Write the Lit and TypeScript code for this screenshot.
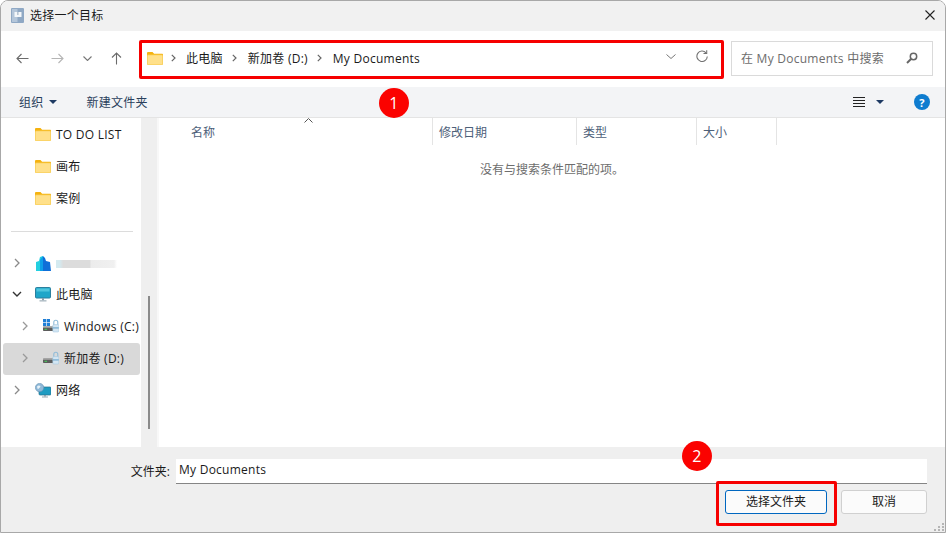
import { LitElement, html, css, svg } from "lit";
import { customElement } from "lit/decorators.js";

const chevR = (c = "#8a8a8a") => html`<svg width="6" height="10" viewBox="0 0 6 10"><path d="M1 1l4 4-4 4" fill="none" stroke=${c} stroke-width="1.3"/></svg>`;
const sep = (cls = "") => html`<svg class="sep ${cls}" width="5" height="8" viewBox="0 0 5 8"><path d="M.8.800L4 4 .8 7.200" fill="none" stroke="#666" stroke-width="1.200"/></svg>`;
const folder = () => html`<svg width="16" height="13" viewBox="0 0 16 13">
  <path d="M0 1.200C0 .5.5 0 1.200 0h4.300l1.600 1.700H15c.6 0 1 .4 1 1V4H0z" fill="#f5b20f"/>
  <rect x="0" y="2.600" width="16" height="10.400" rx="1" fill="#f7c948"/>
  <rect x=".6" y="3.200" width="14.800" height="9.200" rx=".6" fill="#ffe08a"/>
</svg>`;
const drive = (win: boolean) => html`<svg width="16" height="14" viewBox="0 0 16 14">
  ${win ? svg`<g fill="#1f7fd6"><rect x="0" y="0" width="3.200" height="3.200"/><rect x="3.800" y="0" width="3.200" height="3.200"/><rect x="0" y="3.800" width="3.200" height="3.200"/><rect x="3.800" y="3.800" width="3.200" height="3.200"/></g>` : ""}
  <path d="M10.800 6V3.200a2 2 0 0 1 4 0V6" fill="none" stroke="#8fbbd8" stroke-width="1.100"/>
  <rect x="0" y="7.500" width="12" height="4.500" rx=".8" fill="#5c5c5c"/>
  <rect x="0" y="7.500" width="12" height="1.200" fill="#b0b0b0"/>
  <rect x="1.500" y="9.800" width="2.500" height="1" fill="#46d35a"/>
  <rect x="9.800" y="5.600" width="6" height="7.400" rx="1" fill="#d3e6f3" stroke="#9cc3dc" stroke-width=".5"/>
  <rect x="9.800" y="8.200" width="6" height="1.400" fill="#7fb2d4"/>
</svg>`;

interface NavRow { label?: string; icon: unknown; level: number; arrow?: "r" | "d"; selected?: boolean; blur?: boolean; lift?: boolean; }

const rowsTop: NavRow[] = [
  { label: "TO DO LIST", icon: folder(), level: 1 },
  { label: "画布", icon: folder(), level: 1 },
  { label: "案例", icon: folder(), level: 1 },
];
const rowsBottom: NavRow[] = [
  { blur: true, level: 1, arrow: "r", icon: html`<svg width="15" height="15" viewBox="0 0 15 15"><path d="M0 6l3-1 1-4 3-1v15H0z" fill="#22cfe0"/><path d="M7 0l2 2 1 3 4 1 1 9H7z" fill="#0f6fd8"/><path d="M4 4l3-4v15H4z" fill="#0d9fe8"/></svg>` },
  { label: "此电脑", level: 1, arrow: "d", lift: true, icon: html`<svg width="16" height="15" viewBox="0 0 16 15"><rect x=".5" y=".5" width="15" height="10.500" rx="1" fill="#1fa6c9" stroke="#2b7f9e"/><rect x="1.500" y="1.500" width="13" height="3" fill="#4fc5dd"/><rect x="7" y="11" width="2" height="2.400" fill="#8aa0ad"/><rect x="4.500" y="13.200" width="7" height="1.300" fill="#a7b6bf"/></svg>` },
  { label: "Windows (C:)", level: 2, arrow: "r", lift: true, icon: drive(true) },
  { label: "新加卷 (D:)", level: 2, arrow: "r", selected: true, lift: true, icon: drive(false) },
  { label: "网络", level: 1, arrow: "r", lift: true, icon: html`<svg width="16" height="15" viewBox="0 0 16 15"><rect x="4" y="4" width="12" height="8" rx="1" fill="#1f9cc2" stroke="#22708c" stroke-width=".7"/><rect x="9" y="12" width="2" height="1.600" fill="#8aa0ad"/><rect x="7" y="13.400" width="6" height="1.200" fill="#a7b6bf"/><circle cx="4.600" cy="4.600" r="4.200" fill="#8fb9d8" stroke="#5f8fb0" stroke-width=".6"/><path d="M2 3.400c1.400-1.600 2.600-1 3.300-.3.5 1.200-1 1.800-1.800 2.600-.6.800-1 0-1.500-2.300z" fill="#e7f2f9"/></svg>` },
];

@customElement("app-root")
export class AppRoot extends LitElement {
  static styles = css`
    :host { display: block; position: relative; width: 946px; height: 533px; overflow: hidden; background: #fff;
      font-family: "Open Sans", "Noto Sans CJK SC", sans-serif; font-size: 12px; letter-spacing: .25px; color: #1a1a1a; }
    svg { display: block; flex: none; }
    .win { box-sizing: border-box; height: 533px; display: flex; flex-direction: column; border: 1px solid #a8a8a8; border-radius: 8px 8px 0 0; overflow: hidden; background: #fff; }

    .title { height: 30px; flex: none; box-sizing: border-box; background: #f1f1f1; display: flex; align-items: center; padding: 0 10px 2px; }
    .title .name { margin-left: 6px; }
    .title .close { margin-left: auto; }

    .addr-row { height: 56px; flex: none; box-sizing: border-box; display: flex; align-items: center; padding: 0 0 2px 4px; background: #fff; }
    .nav { display: flex; justify-content: center; align-items: center; height: 30px; }
    .w35 { width: 35px; } .w25 { width: 25px; } .w33 { width: 33px; }
    .addr { box-sizing: border-box; margin-left: 6px; width: 584px; height: 38px; display: flex; align-items: center; padding-left: 8px; }
    .crumb { display: flex; align-items: center; }
    .crumb svg.sep { margin: 0 10.500px 0 9.500px; }
    .crumb svg.sep.first { margin: 0 10px 0 0; }
    .folder-first { margin-right: 8px; }
    .addr .end { margin: 0 0 4px auto; display: flex; align-items: center; gap: 20px; padding-right: 15px; }
    .search { box-sizing: border-box; margin: 1px 0 0 8px; width: 202px; height: 35px; border: 1px solid #dadada; display: flex; align-items: center; padding: 0 14px 1px 9px; color: #6d6d6d; justify-content: space-between; }

    .tools { height: 31px; flex: none; box-sizing: border-box; background: #f3f4f6; border-bottom: 1px solid #e4e4e4; display: flex; align-items: center; padding-left: 18px; color: #2a3f5c; }
    .caret { width: 0; height: 0; border-left: 4px solid transparent; border-right: 4px solid transparent; border-top: 4px solid #1e3a63; }
    .tools .caret.org { margin: 0 30px 0 5px; }
    .tools .right { margin-left: auto; display: flex; align-items: center; padding-right: 15px; }
    .tools .right .caret { margin: 0 30px 0 11px; }
    .help { width: 16px; height: 16px; border-radius: 50%; background: #0f7ccf; color: #fff; font-size: 11px; font-weight: 700; display: flex; align-items: center; justify-content: center; }

    .main { flex: 1; min-height: 0; display: flex; }
    .side { width: 140px; flex: none; background: #fff; display: flex; flex-direction: column; overflow: hidden; }
    .row { height: 32px; flex: none; box-sizing: border-box; display: flex; align-items: center; white-space: nowrap; margin: 0 1px 0 2px; border-radius: 3px; }
    .row.lift { padding-bottom: 2px; }
    .row.selected { background: #d9d9d9; }
    .row .arrow { width: 10px; display: flex; justify-content: center; flex: none; }
    .row.l1 { padding-left: 9px; }
    .row.l2 { padding-left: 17px; }
    .row.l1 .ic { margin-left: 13px; }
    .row.l2 .ic { margin-left: 13px; }
    .row .ic { width: 16px; display: flex; justify-content: center; margin-right: 5px; }
    .blur { width: 61px; height: 8px; margin-top: 2px; background: linear-gradient(90deg, #d4eaf0 0, #d4eaf0 6%, #dcdcdc 12%, #dcdcdc 56%, #ececec 57%, #f0f0f0 95%, transparent 100%); }
    .divider { height: 1px; background: #dcdcdc; margin: 17px 8px 15px 10px; flex: none; }
    .scroll { width: 16px; flex: none; background: #efefef; position: relative; }
    .thumb { position: absolute; left: 7px; top: 178px; width: 2px; height: 133px; background: #8a8a8a; }
    .gutter { width: 2px; flex: none; background: #f8f8f8; }
    .content { flex: 1; display: flex; flex-direction: column; align-items: stretch; min-width: 0; background: #fff; }
    .head { display: flex; height: 27px; color: #4d6079; flex: none; position: relative; letter-spacing: 0; }
    .cell { box-sizing: border-box; border-right: 1px solid #e4e4e4; padding: 0 6px; display: flex; align-items: center; }
    .cell.name { width: 274px; padding-left: 32px; }
    .cell.date { width: 144px; }
    .cell.type { width: 120px; }
    .cell.size { width: 80px; }
    .sort { position: absolute; left: 145px; top: 0; }
    .empty { text-align: center; margin-top: 15px; color: #6d6d6d; letter-spacing: 0; }

    .bottom { height: 85px; flex: none; background: #efefef; display: flex; flex-direction: column; padding: 12px 18px 0 0; box-sizing: border-box; position: relative; }
    .file { display: flex; align-items: center; justify-content: flex-end; height: 25px; }
    .file label { margin: 0 6px 2px 0; letter-spacing: 0; }
    .file .input { box-sizing: border-box; width: 751px; height: 25px; background: #fff; border-bottom: 1px solid #858585; display: flex; align-items: center; padding: 0 0 3px 3px; }
    .btns { display: flex; justify-content: flex-end; margin-top: 6px; gap: 14px; letter-spacing: 0; }
    .btn { box-sizing: border-box; height: 24px; border-radius: 3px; background: #fbfbfb; border: 1px solid #d0d0d0; display: flex; align-items: center; justify-content: center; padding-bottom: 2px; }
    .btn.primary { width: 102px; border-color: #0067c0; }
    .btn.cancel { width: 86px; }
    .grip { position: absolute; right: 0; bottom: 0; }

    .box { position: absolute; box-sizing: border-box; border: 3px solid #f60000; border-radius: 2px; pointer-events: none; }
    .box.a { left: 139px; top: 40px; width: 585px; height: 39px; }
    .box.b { left: 716px; top: 481px; width: 121px; height: 45px; }
    .badge { position: absolute; width: 30px; height: 30px; border-radius: 50%; background: #fb0200; color: #fff; font-size: 16px; display: flex; align-items: center; justify-content: center; }
    .badge.a { left: 379px; top: 88px; }
    .badge.b { left: 682px; top: 441px; }
  `;

  private row(r: NavRow) {
    return html`<div class="row l${r.level} ${r.selected ? "selected" : ""} ${r.lift ? "lift" : ""}">
      <span class="arrow">${r.arrow === "r" ? chevR(r.level === 2 ? "#9a9a9a" : "#8a8a8a") : r.arrow === "d"
        ? html`<svg width="10" height="6" viewBox="0 0 10 6"><path d="M1 1l4 4 4-4" fill="none" stroke="#333" stroke-width="1.400"/></svg>` : ""}</span>
      <span class="ic">${r.icon}</span>
      ${r.blur ? html`<span class="blur"></span>` : html`<span>${r.label}</span>`}
    </div>`;
  }

  render() {
    return html`
      <div class="win">
        <div class="title">
          <svg width="13" height="15" viewBox="0 0 13 15"><rect width="13" height="15" rx="1" fill="#8fa8c4"/><rect x="1" y="1" width="5.500" height="13" fill="#b4c6da"/><rect x="3.500" y="4" width="7" height="5" fill="#f4f7fa"/><rect x="6.500" y="4" width=".8" height="3" fill="#7f95ad"/></svg>
          <span class="name">选择一个目标</span>
          <svg class="close" width="10" height="10" viewBox="0 0 10 10"><path d="M.5.500l9 9M9.500.500l-9 9" stroke="#222" stroke-width="1.100"/></svg>
        </div>

        <div class="addr-row">
          <span class="nav w35"><svg width="13" height="11" viewBox="0 0 13 11"><path d="M12.500 5.500H1M5.500 1L1 5.500 5.500 10" fill="none" stroke="#6b6b6b" stroke-width="1.100"/></svg></span>
          <span class="nav w35"><svg width="13" height="11" viewBox="0 0 13 11"><path d="M.5 5.500H12M7.500 1L12 5.500 7.500 10" fill="none" stroke="#b5b5b5" stroke-width="1.100"/></svg></span>
          <span class="nav w25"><svg width="9" height="5" viewBox="0 0 9 5"><path d="M.5.500l4 4 4-4" fill="none" stroke="#777" stroke-width="1.100"/></svg></span>
          <span class="nav w33"><svg width="11" height="13" viewBox="0 0 11 13"><path d="M5.500 12.500V1M1 5.500L5.500 1 10 5.500" fill="none" stroke="#6b6b6b" stroke-width="1.100"/></svg></span>
          <div class="addr">
            <span class="crumb">
              <span class="folder-first">${folder()}</span>
              ${sep("first")}
              <span>此电脑</span>
              ${sep()}
              <span>新加卷 (D:)</span>
              ${sep()}
              <span>My Documents</span>
            </span>
            <span class="end">
              <svg width="10" height="5" viewBox="0 0 10 5"><path d="M.5.500L5 4.500 9.500.500" fill="none" stroke="#777" stroke-width="1"/></svg>
              <svg width="12" height="12" viewBox="0 0 12 12"><path d="M10 2.800A5.200 5.200 0 1 0 11.300 6.500" fill="none" stroke="#737373" stroke-width="1.100"/><path d="M10.700.300v3.200H7.500" fill="none" stroke="#737373" stroke-width="1.100"/></svg>
            </span>
          </div>
          <div class="search">
            <span>在 My Documents 中搜索</span>
            <svg width="12" height="12" viewBox="0 0 12 12"><circle cx="7.500" cy="4.500" r="3.200" fill="none" stroke="#666" stroke-width="1.500"/><path d="M5 7L1 11" stroke="#666" stroke-width="2"/></svg>
          </div>
        </div>

        <div class="tools">
          <span>组织</span><span class="caret org"></span><span>新建文件夹</span>
          <span class="right">
            <svg width="12" height="10" viewBox="0 0 12 10"><path d="M0 .500h12M0 3.500h12M0 6.500h12M0 9.500h12" stroke="#222" stroke-width="1"/></svg>
            <span class="caret"></span>
            <span class="help">?</span>
          </span>
        </div>

        <div class="main">
          <div class="side">
            ${rowsTop.map((r) => this.row(r))}
            <div class="divider"></div>
            ${rowsBottom.map((r) => this.row(r))}
          </div>
          <div class="scroll"><div class="thumb"></div></div>
          <div class="gutter"></div>
          <div class="content">
            <div class="head">
              <span class="cell name">名称</span>
              <span class="cell date">修改日期</span>
              <span class="cell type">类型</span>
              <span class="cell size">大小</span>
              <svg class="sort" width="9" height="5" viewBox="0 0 9 5"><path d="M.5 4.500l4-4 4 4" fill="none" stroke="#555" stroke-width="1"/></svg>
            </div>
            <div class="empty">没有与搜索条件匹配的项。</div>
          </div>
        </div>

        <div class="bottom">
          <div class="file">
            <label>文件夹:</label>
            <div class="input">My Documents</div>
          </div>
          <div class="btns">
            <div class="btn primary">选择文件夹</div>
            <div class="btn cancel">取消</div>
          </div>
          <svg class="grip" width="11" height="9" viewBox="0 0 11 9" fill="#b5b5b5"><rect x="8" y="0" width="2" height="2"/><rect x="4" y="3" width="2" height="2"/><rect x="8" y="3" width="2" height="2"/><rect x="0" y="6" width="2" height="2"/><rect x="4" y="6" width="2" height="2"/><rect x="8" y="6" width="2" height="2"/></svg>
        </div>
      </div>
      <div class="box a"></div>
      <div class="box b"></div>
      <div class="badge a">1</div>
      <div class="badge b">2</div>
    `;
  }
}
